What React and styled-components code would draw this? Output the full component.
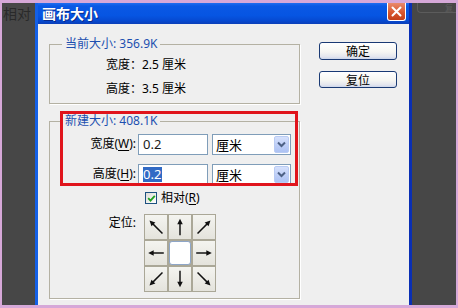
import React from 'react';
import styled, { createGlobalStyle } from 'styled-components';

const GlobalStyle = createGlobalStyle`
  html, body {
    margin: 0;
    padding: 0;
    background: #d6a8d8;
  }
  * {
    box-sizing: border-box;
  }
`;

const font = `"Noto Sans", "Noto Sans CJK SC", sans-serif`;

const Screen = styled.div`
  width: 458px;
  height: 308px;
  border-style: solid;
  border-color: #d6a8d8;
  border-width: 3px 2px 3px 2px;
  background: #474747;
  display: flex;
  font-family: ${font};
  overflow: hidden;
`;

const LeftStrip = styled.div`
  width: 33px;
  flex: none;
  padding: 2px 0 0 1px;
  color: #2a2a2a;
  font-size: 14px;
  line-height: 18px;
`;

const RightStrip = styled.div`
  width: 44px;
  flex: none;
  padding-left: 5px;
`;

const GhostButton = styled.div`
  height: 10px;
  border: 1px solid #5c5c5c;
  border-top: none;
  border-right: none;
  border-radius: 0 0 0 4px;
  color: #5e5e5e;
  font-size: 8px;
  line-height: 9px;
  text-align: right;
  padding-right: 3px;
`;

const Dialog = styled.div`
  width: 377px;
  flex: none;
  display: flex;
  flex-direction: column;
  border-left: 3px solid #1460e6;
  border-right: 3px solid #0a2fb4;
`;

const TitleBar = styled.div`
  height: 21px;
  flex: none;
  display: flex;
  justify-content: space-between;
  align-items: flex-start;
  padding: 0 3px 0 4px;
  background: linear-gradient(#1f6ef0 0, #0a58e4 3px, #0655e2 60%, #0649d0 85%, #0b3fb8 100%);
`;

const Title = styled.div`
  color: #fff;
  font-size: 14px;
  font-weight: bold;
  line-height: 21px;
  text-shadow: 1px 1px 0 #0a2a8a;
`;

const CloseButton = styled.div`
  width: 19px;
  height: 18px;
  border: 1px solid #fff;
  border-top: none;
  border-radius: 0 0 3px 3px;
  background: linear-gradient(#e98a6c, #d8572f 55%, #c43f18);
  display: flex;
  align-items: center;
  justify-content: center;
`;

const Body = styled.div`
  flex: 1;
  position: relative;
  display: flex;
  padding: 0 12px 0 11px;
  background: #efefef;
`;

const Column = styled.div`
  width: 251px;
  flex: none;
  display: flex;
  flex-direction: column;
`;

const Frame = styled.fieldset`
  margin: ${p => p.$top}px 0 0 0;
  padding: ${p => p.$pad};
  border: 1px solid #b4b1a3;
  box-shadow: 1px 1px 0 #ffffff;
  min-width: 0;
  display: flex;
  flex-direction: column;
`;

const Legend = styled.legend`
  margin-left: 12px;
  padding: 0 3px;
  font-size: 12px;
  line-height: 14px;
  color: #1d4fb0;
`;

const InfoRow = styled.div`
  height: 24px;
  line-height: 24px;
  padding-left: 56px;
  font-size: 12px;
  color: #000;
`;

const FieldRow = styled.div`
  height: ${p => p.$h}px;
  margin-top: ${p => p.$gap || 0}px;
  display: flex;
  align-items: ${p => (p.$top ? 'flex-start' : 'center')};
  font-size: 12px;
  color: #000;
`;

const Label = styled.div`
  width: 86px;
  flex: none;
  text-align: right;
  line-height: 18px;
  margin-right: 2px;

  u {
    text-decoration: underline;
    text-underline-offset: 2px;
  }
`;

const TextBox = styled.div`
  width: 70px;
  height: 21px;
  border: 1px solid #7f9db9;
  background: #fff;
  padding-left: 4px;
  display: flex;
  align-items: center;
  font-size: 13px;
  color: #1a1a1a;
`;

const Selected = styled.span`
  background: #316ac5;
  color: #fff;
  line-height: 15px;
  padding: 0 1px 0 0;
`;

const Select = styled.div`
  width: 79px;
  height: 21px;
  margin-left: 4px;
  border: 1px solid #7f9db9;
  background: #fff;
  display: flex;
  align-items: center;
  padding: 1px 1px 1px 3px;
  font-size: 13px;
`;

const SelectText = styled.div`
  flex: 1;
`;

const DropButton = styled.div`
  width: 15px;
  height: 17px;
  border-radius: 2px;
  border: 1px solid #b9cbf3;
  background: linear-gradient(#d6e1fc, #bccdf7 60%, #adc2f3);
  display: flex;
  align-items: center;
  justify-content: center;
`;

const Check = styled.div`
  width: 12px;
  height: 12px;
  margin-left: 7px;
  border: 1px solid #1c5180;
  background: linear-gradient(135deg, #dcdcd6, #fff);
  display: flex;
  align-items: center;
  justify-content: center;
`;

const CheckText = styled.span`
  margin-left: 4px;
  line-height: 18px;

  u {
    text-underline-offset: 2px;
  }
`;

const AnchorGrid = styled.div`
  margin-left: 6px;
  display: grid;
  grid-template-columns: repeat(3, 22px);
  grid-template-rows: repeat(3, 24px);
  gap: 2px;
  padding: 1px;
  background: #aaa797;
`;

const Cell = styled.div`
  display: flex;
  align-items: center;
  justify-content: center;
  background: ${p => (p.$center ? '#ffffff' : 'linear-gradient(#f4f4f0, #e4e3dc)')};
  border: ${p => (p.$center ? '1px solid #8ea6c8' : 'none')};
  border-radius: ${p => (p.$center ? '3px' : '0')};
`;

const ButtonColumn = styled.div`
  width: 78px;
  margin-left: 19px;
  padding-top: 18px;
  display: flex;
  flex-direction: column;
`;

const Button = styled.div`
  height: ${p => p.$h}px;
  margin-top: ${p => p.$gap || 0}px;
  border: 1px solid #1a3a74;
  border-radius: 3px;
  background: linear-gradient(#ffffff, #f6f6f2 55%, #e4e6ee 85%, #cdd6ea);
  display: flex;
  align-items: center;
  justify-content: center;
  font-size: 12px;
  color: #000;
`;

const Highlight = styled.div`
  position: absolute;
  left: 22px;
  top: 87px;
  width: 238px;
  height: 75px;
  border: 3px solid #e0141c;
  pointer-events: none;
`;

const Arrow = ({ angle, len }) => {
  const h = len / 2;
  return (
    <svg width="22" height="22" viewBox="0 0 24 24">
      <g transform={`rotate(${angle} 12 12)`}>
        <line x1={12 - h} y1="12" x2={12 + h - 4} y2="12" stroke="#111" strokeWidth="1.6" />
        <polygon points={`${12 + h},12 ${12 + h - 6},9 ${12 + h - 6},15`} fill="#111" />
      </g>
    </svg>
  );
};

const anchors = [
  { angle: 225, len: 20 },
  { angle: 270, len: 18 },
  { angle: 315, len: 20 },
  { angle: 180, len: 17 },
  null,
  { angle: 0, len: 17 },
  { angle: 135, len: 20 },
  { angle: 90, len: 18 },
  { angle: 45, len: 20 },
];

const Chevron = () => (
  <svg width="9" height="7" viewBox="0 0 9 7">
    <path d="M1 1.5 L4.5 5 L8 1.5" stroke="#4d6185" strokeWidth="2" fill="none" />
  </svg>
);

const App = () => {
  return (
    <>
      <GlobalStyle />
      <Screen>
        <LeftStrip>相对</LeftStrip>
        <Dialog>
          <TitleBar>
            <Title>画布大小</Title>
            <CloseButton>
              <svg width="11" height="11" viewBox="0 0 11 11">
                <path d="M1.5 1.5 L9.5 9.5 M9.5 1.5 L1.5 9.5" stroke="#fff" strokeWidth="2" strokeLinecap="round" />
              </svg>
            </CloseButton>
          </TitleBar>
          <Body>
            <Column>
              <Frame $top={13} $pad="2px 0 2px 0">
                <Legend>当前大小: 356.9K</Legend>
                <InfoRow>宽度：2.5 厘米</InfoRow>
                <InfoRow>高度：3.5 厘米</InfoRow>
              </Frame>
              <Frame $top={10} $pad="5px 0 6px 0">
                <Legend>新建大小: 408.1K</Legend>
                <FieldRow $h={22}>
                  <Label>宽度(<u>W</u>):</Label>
                  <TextBox>0.2</TextBox>
                  <Select>
                    <SelectText>厘米</SelectText>
                    <DropButton>
                      <Chevron />
                    </DropButton>
                  </Select>
                </FieldRow>
                <FieldRow $h={22} $gap={8}>
                  <Label>高度(<u>H</u>):</Label>
                  <TextBox>
                    <Selected>0.2</Selected>
                  </TextBox>
                  <Select>
                    <SelectText>厘米</SelectText>
                    <DropButton>
                      <Chevron />
                    </DropButton>
                  </Select>
                </FieldRow>
                <FieldRow $h={18} $gap={4}>
                  <Label />
                  <Check>
                    <svg width="9" height="9" viewBox="0 0 9 9">
                      <path d="M1.2 4.2 L3.5 6.6 L7.8 1.8" stroke="#21a121" strokeWidth="1.8" fill="none" />
                    </svg>
                  </Check>
                  <CheckText>相对(<u>R</u>)</CheckText>
                </FieldRow>
                <FieldRow $h={78} $gap={7} $top>
                  <Label>定位:</Label>
                  <AnchorGrid>
                    {anchors.map((a, i) => (
                      <Cell key={i} $center={!a}>
                        {a && <Arrow angle={a.angle} len={a.len} />}
                      </Cell>
                    ))}
                  </AnchorGrid>
                </FieldRow>
              </Frame>
            </Column>
            <ButtonColumn>
              <Button $h={18}>确定</Button>
              <Button $h={17} $gap={11}>复位</Button>
            </ButtonColumn>
            <Highlight />
          </Body>
        </Dialog>
        <RightStrip>
          <GhostButton>复</GhostButton>
        </RightStrip>
      </Screen>
    </>
  );
};

export default App;
